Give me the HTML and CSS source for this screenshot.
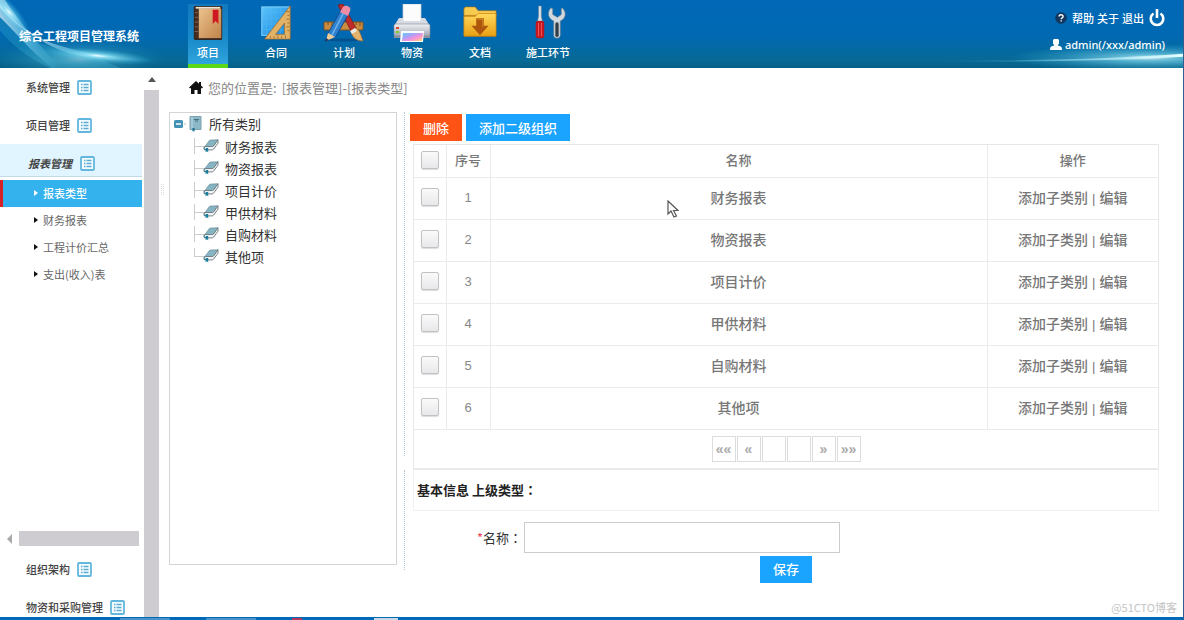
FILE: index.html
```html
<!DOCTYPE html>
<html lang="zh-CN">
<head>
<meta charset="utf-8">
<meta name="viewport" content="width=device-width, initial-scale=1">
<title>综合工程项目管理系统</title>
<link rel="stylesheet" href="styles.css">
</head>
<body>
<svg class="defs" aria-hidden="true">
  <defs>
    <linearGradient id="book" x1="0" y1="0" x2="1" y2="1"><stop offset="0" stop-color="#ecc28d"/><stop offset="1" stop-color="#c0824a"/></linearGradient>
    <linearGradient id="sky" x1="0" y1="0" x2="1" y2="1"><stop offset="0" stop-color="#5cc4fb"/><stop offset="1" stop-color="#1285e0"/></linearGradient>
    <linearGradient id="gold" x1="0" y1="0" x2="0" y2="1"><stop offset="0" stop-color="#ffd95c"/><stop offset="1" stop-color="#e9a013"/></linearGradient>
    <linearGradient id="steel" x1="0" y1="0" x2="0" y2="1"><stop offset="0" stop-color="#f1f2f5"/><stop offset="1" stop-color="#a0a5b2"/></linearGradient>
    <linearGradient id="rainbow" x1="0" y1="0" x2="1" y2="1"><stop offset="0" stop-color="#5ccdfc"/><stop offset=".35" stop-color="#ab9ff7"/><stop offset=".65" stop-color="#fa92d6"/><stop offset="1" stop-color="#ffe36c"/></linearGradient>
    <radialGradient id="glow"><stop offset="0" stop-color="#fff"/><stop offset=".2" stop-color="#9beafa" stop-opacity=".8"/><stop offset="1" stop-color="#2fb4dc" stop-opacity="0"/></radialGradient>
    <linearGradient id="beam" x1="0" y1="0" x2="1" y2="0"><stop offset="0" stop-color="#fff" stop-opacity=".9"/><stop offset=".5" stop-color="#7fd4f2" stop-opacity=".7"/><stop offset="1" stop-color="#4ab9dc" stop-opacity="0"/></linearGradient>
    <linearGradient id="beam-r" x1="0" y1="0" x2="1" y2="0"><stop offset="0" stop-color="#4fc4e8" stop-opacity="0"/><stop offset="1" stop-color="#e6ffff"/></linearGradient>
    <symbol id="list" viewBox="0 0 15 15"><rect x="1" y="1" width="13" height="13" rx="1" fill="#f4fbff" stroke="#63b7dd" stroke-width="1.8"/><path d="M4 4.500h1.500M6.500 4.500h5M4 7.500h1.500M6.500 7.500h5M4 10.500h1.500M6.500 10.500h5" stroke="#5cacd2" stroke-width="1.300"/></symbol>
    <symbol id="leaf" viewBox="0 0 16 14"><path d="M2 7.500 6 2q.6-.8 1.500-.9L15 .8l-4.200 6q-.5.700-1.400.8z" fill="#86b5c4" stroke="#6c8c98" stroke-width=".7"/><path d="M2 7.500 9.400 7.600q.9-.1 1.400-.8L15 .8v3.400l-4.500 6q-.5.700-1.500.7H5" fill="#f4f6f7" stroke="#69757c" stroke-width=".9"/><path d="M2 7.500Q.3 9 1.500 10.600h2" fill="none" stroke="#58808e" stroke-width="1.200"/><path d="M2.600 9h2.600v4.500L4 12.300l-1.400 1z" fill="#1b7d9c"/></symbol>
  </defs>
</svg>
<div class="app">
  <header class="header">
    <svg class="glare glare-left" viewBox="0 0 170 67" preserveAspectRatio="none" aria-hidden="true">
      <path d="M0 12C22 38 50 50 92 54L120 67H50C24 55 10 42 0 30z" fill="#2fa5c8" opacity=".35"/>
      <ellipse cx="80" cy="58" rx="85" ry="20" fill="url(#glow)" opacity=".4"/>
      <path d="M0 0h5c13 20 30 40 56 67h-9C28 48 14 30 0 17z" fill="url(#beam)" opacity=".7"/>
      <path d="M0 4c14 20 40 42 98 49 24 4 44 6 62 6-48 3-95-2-122-21C20 28 10 18 0 8z" fill="url(#beam)" opacity=".7"/>
      <ellipse cx="98" cy="55" rx="56" ry="7" fill="url(#glow)" transform="rotate(5 98 55)"/>
      <ellipse cx="9" cy="12" rx="30" ry="9" fill="url(#glow)" opacity=".95" transform="rotate(48 9 12)"/>
    </svg>
    <svg class="glare glare-right" viewBox="0 0 280 67" preserveAspectRatio="none" aria-hidden="true">
      <ellipse cx="245" cy="57" rx="140" ry="14" fill="url(#glow)" opacity=".8"/>
      <path d="M30 60Q180 60 280 53v3Q180 62 30 60z" fill="url(#beam-r)"/>
    </svg>
    <h1 class="brand">综合工程项目管理系统</h1>
    <nav class="nav" aria-label="主导航">
      <a class="nav-item active" href="#project">
        <svg class="nav-icon" viewBox="0 0 38 38" aria-hidden="true"><rect x="4" y="1" width="30" height="36" rx="1.500" fill="#352822"/><path d="M6 2h26v2H6z" fill="#eee3d3"/><rect x="9" y="4" width="24" height="31" fill="url(#book)"/><path d="M5 4h4v31H5z" fill="#4a2c1e"/><path d="M5 8h4M5 13h4M5 18h4M5 23h4M5 28h4" stroke="#7d6251"/><path d="M24 5h6v15l-3-3-3 3z" fill="#cf1920"/></svg>
        <span>项目</span></a>
      <a class="nav-item" href="#contract">
        <svg class="nav-icon" viewBox="0 0 38 38" aria-hidden="true"><rect x="4" y="2" width="29" height="30" fill="url(#sky)" stroke="#8ad6fa"/><path d="M9 2v30M14 2v30M19 2v30M24 2v30M4 8h29M4 14h29M4 20h29M4 26h29" stroke="#56b9f1" stroke-width=".5"/><path fill-rule="evenodd" d="M34 1v35H7zm-6 18L18.500 31H28z" fill="#e2b267" stroke="#9d6827" stroke-width=".8"/><path d="M33 7h-3M33 11h-2M33 15h-3M33 19h-2M33 23h-3M33 27h-2M13 35v-2M17 35v-2M21 35v-3M25 35v-2M29 35v-3" stroke="#82551f" stroke-width=".7"/></svg>
        <span>合同</span></a>
      <a class="nav-item" href="#plan">
        <svg class="nav-icon nav-icon-wide" viewBox="0 0 42 38" aria-hidden="true"><ellipse cx="21" cy="36" rx="17" ry="1.500" fill="#06417b" opacity=".6"/><rect x="1" y="18" width="39" height="8" rx="1" fill="#c98b42" stroke="#85521b"/><path d="M5 18v3M9 18v4M13 18v3M29 18v4M33 18v3M37 18v4" stroke="#79501f"/><path d="m15 1 5-1 14 26-5 3z" fill="#bd2b2b" stroke="#761515" stroke-width=".7"/><path d="m28 27 5-3c4 2 5 8 7 13-6 0-11-3-12-10z" fill="#e4b36b" stroke="#9b672d" stroke-width=".7"/><path d="m27 27 5-3 2 3-5 3z" fill="#ebe9df"/><path d="m18 6 8 3L12 34l-8-3z" fill="#2f80cf" stroke="#114c8e"/><path d="m21 8-13 25" stroke="#6fb6ea" stroke-width="1.500"/><path d="m5 29 7 4-9 4z" fill="#f0cb93"/><path d="m3 34 3 2-4 2z" fill="#24345c"/><path d="m17 8 3-5c3-3 9 0 7 4l-2 5z" fill="#f08da5"/></svg>
        <span>计划</span></a>
      <a class="nav-item" href="#material">
        <svg class="nav-icon nav-icon-wide" viewBox="0 0 42 38" aria-hidden="true"><path d="M9 16h24l6 6v12H3V22z" fill="#8e929f"/><path d="M12 0h18v18H12z" fill="#fcfcfd" stroke="#c5cbd8" stroke-width=".7"/><path d="M8 14h4v3h18v-3h4l5 8H3z" fill="#d8dbe2"/><rect x="3" y="20" width="36" height="12" rx="2" fill="url(#steel)" stroke="#858c9b" stroke-width=".6"/><path d="M5 24h3" stroke="#db4a2a" stroke-width="2"/><path d="M5 28h3" stroke="#7cca2d" stroke-width="2"/><path d="M10 27h23l-1 11H9z" fill="#fafbfc"/><path d="M12 29h20l-1 8H11z" fill="url(#rainbow)"/></svg>
        <span>物资</span></a>
      <a class="nav-item" href="#docs">
        <svg class="nav-icon" viewBox="0 0 38 38" aria-hidden="true"><path d="M2 3h12l3 4h18v26H2z" fill="#d99018"/><path d="M2 4.500 3.500 2H14l3 4h19v5H2z" fill="#f7ca50" stroke="#a77011" stroke-width=".6"/><path d="M2 12h12l3-3h19v24H2z" fill="url(#gold)" stroke="#c27c0c" stroke-width=".7"/><path d="M15 14h8v8h5l-9 10-9-10h5z" fill="#ae570c"/><path d="M16 15h6v8" fill="none" stroke="#d68a29"/></svg>
        <span>文档</span></a>
      <a class="nav-item" href="#construction">
        <svg class="nav-icon" viewBox="0 0 38 38" aria-hidden="true"><path d="M9 1h3v11l1 5H8l1-5z" fill="#dce2e8" stroke="#637c91" stroke-width=".6"/><rect x="6" y="17" width="9" height="18" rx="2.500" fill="#c3161e"/><path d="M9 19v14M12 19v14" stroke="#f35c5f"/><path d="M22 3c-5 6-2 12 3 14v15q0 3 3.500 3t3.500-3V17c6-3 7-9 2-14l-1 1v6l-4 3-5-3V4z" fill="#d1d8de" stroke="#60788b" stroke-width=".7"/><path d="M28.500 20v12" stroke="#303d47" stroke-width="3.500" stroke-linecap="round"/></svg>
        <span>施工环节</span></a>
    </nav>
    <div class="account">
      <div class="account-links">
        <svg class="help-icon" viewBox="0 0 13 13" aria-hidden="true"><circle cx="6.500" cy="6.500" r="6.300" fill="#12365d"/><path d="M4.400 5q0-2 2.200-2t2.200 1.800c0 1.500-2.100 1.500-2.100 3M6.700 9v1.400" fill="none" stroke="#fff" stroke-width="1.500"/></svg>
        <a href="#help">帮助</a><a href="#about">关于</a><a href="#logout">退出</a>
        <svg class="power-icon" viewBox="0 0 16 18" aria-hidden="true"><path d="M4.500 4.500a6.300 6.300 0 1 0 7 0M8 0v9" fill="none" stroke="#fff" stroke-width="2.600"/></svg>
      </div>
      <div class="account-user">
        <svg class="user-icon" viewBox="0 0 12 11" aria-hidden="true"><path d="M4 0h4l1 1v3.500L7.700 6.500 11 7.500q1 .5 1 3.500H0q0-3 1-3.500l3.300-1L3 4.500V1z" fill="#fff"/></svg>
        <span>admin(/xxx/admin)</span>
      </div>
    </div>
  </header>
  <div class="body">
    <aside class="sidebar">
      <nav class="menu" aria-label="侧边菜单">
        <a class="menu-group" href="#sys">系统管理<svg class="list-icon"><use href="#list"/></svg></a>
        <a class="menu-group" href="#prj">项目管理<svg class="list-icon"><use href="#list"/></svg></a>
        <a class="menu-group open" href="#report"><em>报表管理</em><svg class="list-icon"><use href="#list"/></svg></a>
        <div class="submenu">
          <a class="submenu-item active" href="#type">报表类型</a>
          <a class="submenu-item" href="#finance">财务报表</a>
          <a class="submenu-item" href="#pricing">工程计价汇总</a>
          <a class="submenu-item" href="#expense">支出(收入)表</a>
        </div>
        <div class="hscroll"><span class="arrow-left"></span><span class="hthumb"></span></div>
        <a class="menu-group" href="#org">组织架构<svg class="list-icon"><use href="#list"/></svg></a>
        <a class="menu-group" href="#purchase">物资和采购管理<svg class="list-icon"><use href="#list"/></svg></a>
      </nav>
      <div class="vscroll"><span class="arrow-up"></span><span class="vthumb"></span></div>
    </aside>
    <main class="main">
      <div class="breadcrumb">
        <svg class="home-icon" viewBox="0 0 14 13" aria-hidden="true"><path d="M7 0 10 2.700V1h2v3.500l2 2-1 1-1-.8V13H8.500V9h-3v4H2V6.700l-1 .8-1-1z" fill="#111"/></svg>
        <span>您的位置是:</span><span>[报表管理]-[报表类型]</span>
      </div>
      <div class="panes">
        <section class="tree" aria-label="类别">
          <div class="tree-root">
            <svg class="toggle-icon" viewBox="0 0 12 10" aria-hidden="true"><rect width="9" height="8" y="1" rx="1.500" fill="#4391b5"/><path d="M2 5h5" stroke="#fff" stroke-width="1.500"/><path d="M10 5h2" stroke="#bbb"/></svg>
            <svg class="root-icon" viewBox="0 0 13 16" aria-hidden="true"><path d="M1 .5h11v13H1z" fill="#8db8c8" stroke="#7fa2af"/><path d="M3 1v12" stroke="#bcdae5"/><path d="M5 3.500h5M6 5h3" stroke="#476f80"/><path d="M3.500 12h2v4l-1-1-1 .5z" fill="#176f91"/></svg>
            <span>所有类别</span>
          </div>
          <ul class="tree-list">
            <li><svg class="leaf-icon"><use href="#leaf"/></svg>财务报表</li>
            <li><svg class="leaf-icon"><use href="#leaf"/></svg>物资报表</li>
            <li><svg class="leaf-icon"><use href="#leaf"/></svg>项目计价</li>
            <li><svg class="leaf-icon"><use href="#leaf"/></svg>甲供材料</li>
            <li><svg class="leaf-icon"><use href="#leaf"/></svg>自购材料</li>
            <li><svg class="leaf-icon"><use href="#leaf"/></svg>其他项</li>
          </ul>
        </section>
        <div class="splitter"><span class="split-upper"></span><span class="split-lower"></span></div>
        <section class="content">
          <div class="toolbar"><button class="btn danger" type="button">删除</button><button class="btn" type="button">添加二级组织</button></div>
          <div class="sheet">
            <table class="grid">
              <colgroup><col class="col-check"><col class="col-no"><col><col class="col-actions"></colgroup>
              <thead><tr><th><input type="checkbox" aria-label="全选"></th><th>序号</th><th>名称</th><th>操作</th></tr></thead>
              <tbody>
                <tr><td><input type="checkbox" aria-label="选择 1"></td><td class="no">1</td><td>财务报表</td><td><a href="#add">添加子类别</a><span class="bar">|</span><a href="#edit">编辑</a></td></tr>
                <tr><td><input type="checkbox" aria-label="选择 2"></td><td class="no">2</td><td>物资报表</td><td><a href="#add">添加子类别</a><span class="bar">|</span><a href="#edit">编辑</a></td></tr>
                <tr><td><input type="checkbox" aria-label="选择 3"></td><td class="no">3</td><td>项目计价</td><td><a href="#add">添加子类别</a><span class="bar">|</span><a href="#edit">编辑</a></td></tr>
                <tr><td><input type="checkbox" aria-label="选择 4"></td><td class="no">4</td><td>甲供材料</td><td><a href="#add">添加子类别</a><span class="bar">|</span><a href="#edit">编辑</a></td></tr>
                <tr><td><input type="checkbox" aria-label="选择 5"></td><td class="no">5</td><td>自购材料</td><td><a href="#add">添加子类别</a><span class="bar">|</span><a href="#edit">编辑</a></td></tr>
                <tr><td><input type="checkbox" aria-label="选择 6"></td><td class="no">6</td><td>其他项</td><td><a href="#add">添加子类别</a><span class="bar">|</span><a href="#edit">编辑</a></td></tr>
              </tbody>
            </table>
            <div class="pager">
              <button type="button" aria-label="首页">««</button><button type="button" aria-label="上一页">«</button><button type="button" aria-label="上一组"></button><button type="button" aria-label="下一组"></button><button type="button" aria-label="下一页">»</button><button type="button" aria-label="末页">»»</button>
            </div>
          </div>
          <h2 class="section-title">基本信息 上级类型<span class="colon" lang="zh-TW">：</span></h2>
          <form class="form">
            <div class="field"><label for="name"><span class="required">*</span>名称<span class="colon" lang="zh-TW">：</span></label><input id="name" type="text"></div>
            <button class="btn save" type="button">保存</button>
          </form>
        </section>
      </div>
      <span class="handle"></span>
      <svg class="pointer" viewBox="0 0 12 18" aria-hidden="true"><path d="M1 1v13l3-3 3 6 2.500-1-3-5.500H11z" fill="#fff" stroke="#555" stroke-width="1.200"/></svg>
      <span class="watermark">@51CTO博客</span>
    </main>
  </div>
  <footer class="taskbar"><span class="task"></span><span class="task"></span><span class="task task-red"></span><span class="task task-light"></span></footer>
</div>
</body>
</html>
```
FILE: styles.css
```css
* { box-sizing: border-box; }
body { margin: 0; font-family: "Noto Sans CJK SC", sans-serif; font-size: 13px; color: #333; background: #fff; }
a { color: inherit; text-decoration: none; }
button, input { font: inherit; }
svg { display: block; flex: none; }
.defs { position: absolute; width: 0; height: 0; }
.app { display: flex; flex-direction: column; min-height: 100vh; border-right: 1px solid #315f91; }

.header { position: relative; display: flex; height: 68px; color: #fff; background: linear-gradient(#0068b6, #0069b3 50%, #076994 90%, #075f85); overflow: hidden; }
.glare { position: absolute; top: 0; height: 100%; }
.glare-left { left: 0; width: 170px; }
.glare-right { right: 0; width: 280px; }
.brand { position: relative; width: 174px; margin: 0; padding: 26px 0 0 19px; font-size: 12px; line-height: 20px; font-weight: 700; white-space: nowrap; }
.nav { display: flex; padding-top: 4px; }
.nav-item { display: flex; flex-direction: column; align-items: center; width: 68px; height: 64px; font-size: 11px; line-height: 20px; font-weight: 500; border-bottom: 4px solid transparent; }
.nav-item.active { width: 40px; margin: 0 14px; background: linear-gradient(#1378bd, #1b8ccb 60%, #2fa4dd); border-bottom-color: #5bd716; }
.nav-icon { width: 36px; height: 38px; }
.nav-icon-wide { width: 42px; }
.account { position: relative; margin-left: auto; padding: 8px 18px 0 0; font-weight: 500; }
.account-links { display: flex; align-items: center; justify-content: flex-end; gap: 3px; height: 20px; font-size: 11px; }
.help-icon { width: 12px; height: 12px; margin-right: 2px; }
.power-icon { width: 16px; height: 18px; margin-left: 2px; }
.account-user { display: flex; align-items: center; justify-content: flex-end; gap: 3px; height: 20px; margin-top: 6px; font-family: "Noto Sans", sans-serif; font-size: 11px; }
.user-icon { width: 12px; height: 11px; }

.body { display: flex; flex: 1; }
.sidebar { display: flex; width: 159px; flex: none; }
.menu { display: flex; flex-direction: column; width: 142px; }
.menu-group { display: flex; align-items: center; gap: 7px; padding: 9px 0 9px 26px; font-size: 11px; line-height: 20px; font-weight: 500; color: #444; white-space: nowrap; }
.menu-group.open { gap: 8px; padding: 9px 0 3px 28px; margin-bottom: 3px; background: #e0f5ff; border-bottom: 1px solid #c2d9e6; }
.menu-group:last-child { padding-bottom: 0; }
.menu-group em { font-weight: 700; }
.list-icon { width: 15px; height: 15px; }
.submenu { flex: 1; }
.submenu-item { display: flex; align-items: center; height: 27px; padding: 0 0 1px 31px; font-size: 11px; color: #666; border-left: 3px solid transparent; }
.submenu-item::before { content: ""; margin-right: 5px; border: 3px solid transparent; border-left: 4px solid #111; border-right: 0; }
.submenu-item.active { color: #fff; font-weight: 500; background: #34b2ee; border-left-color: #d62027; }
.submenu-item.active::before { border-left-color: #fff; }
.hscroll { display: flex; align-items: center; gap: 7px; height: 15px; margin: 0 3px 4px 7px; }
.arrow-left { border: 5px solid transparent; border-right-color: #aaa; border-left: 0; }
.hthumb { flex: 1; height: 15px; background: #ceccd0; }
.vscroll { display: flex; flex-direction: column; align-items: center; gap: 8px; width: 15px; margin-left: 2px; padding-top: 9px; }
.arrow-up { border: 4px solid transparent; border-bottom: 5px solid #555; border-top: 0; }
.vthumb { flex: 1; width: 100%; background: #ceccd0; }

.main { position: relative; flex: 1; min-width: 0; padding: 0 24px 0 10px; }
.breadcrumb { display: flex; align-items: center; gap: 5px; height: 44px; padding: 0 0 6px 20px; color: #888; }
.home-icon { width: 14px; height: 13px; }
.panes { display: flex; }
.tree { width: 228px; flex: none; margin-bottom: 18px; padding: 0 4px; border: 1px solid #d4d4d4; color: #333; }
.tree-root { display: flex; align-items: center; height: 21px; }
.toggle-icon { width: 12px; height: 10px; margin-right: 3px; }
.root-icon { width: 13px; height: 16px; margin-right: 7px; }
.tree-list { margin: 0; padding: 1px 0 0 20px; list-style: none; }
.tree-list li { position: relative; display: flex; align-items: center; height: 22px; padding-left: 9px; }
.tree-list li::before { content: ""; position: absolute; left: 0; top: 3px; width: 9px; height: 8px; border-left: 1px solid #ccc; border-bottom: 1px solid #ccc; }
.tree-list li:not(:last-child)::after { content: ""; position: absolute; left: 0; top: 11px; height: 8px; border-left: 1px solid #ccc; }
.leaf-icon { width: 16px; height: 14px; margin-right: 6px; }
.splitter { display: flex; flex-direction: column; gap: 14px; width: 1px; margin: 0 5px 13px 7px; }
.splitter span { border-left: 1px dotted #b4c6d2; }
.split-upper { flex: 344; }
.split-lower { flex: 99; }
.content { flex: 1; min-width: 0; padding-top: 2px; }
.toolbar { display: flex; gap: 4px; margin-bottom: 3px; }
.btn { height: 27px; padding: 0 13px; border: 0; color: #fff; background: #1aa3ff; font-weight: 500; line-height: 20px; }
.btn.danger { background: #ff5316; }
.sheet { margin-left: 3px; border: 1px solid #e7e7e7; border-bottom: 2px solid #eaeaea; }
.grid { width: 100%; border-collapse: collapse; table-layout: fixed; }
.col-check { width: 32px; }
.col-no { width: 44px; }
.col-actions { width: 171px; }
.grid th, .grid td { height: 42px; padding: 0 0 2px; text-align: center; border: 1px solid #ebebeb; font-size: 14px; font-weight: 500; color: #777; }
.grid tr > :first-child { border-left: 0; }
.grid tr > :last-child { border-right: 0; }
.grid th { height: 32px; border-top: 0; font-size: 13px; }
.grid td.no { font-family: "Liberation Sans", sans-serif; font-size: 13px; font-weight: 400; color: #888; }
.bar { margin: 0 4px; font-family: "Liberation Sans", sans-serif; font-size: 13px; font-weight: 400; }
.grid input { display: block; appearance: none; width: 18px; height: 18px; margin: 0 auto; border: 1px solid #c2c2c2; border-radius: 2px; background: linear-gradient(#fafafa, #e8e8eb); box-shadow: 0 1px 1px #ddd; }
.pager { display: flex; justify-content: center; gap: 1px; padding: 6px 0; }
.pager button { display: grid; place-items: center; width: 24px; height: 26px; padding: 0; border: 1px solid #ddd; background: #fff; color: #aaa; font-family: "Liberation Sans", sans-serif; font-size: 14px; font-weight: 700; }
.section-title { margin: 0 0 0 3px; padding: 10px 3px; border: 1px solid #f2f2f2; border-top: 0; font-size: 13px; line-height: 20px; font-weight: 700; color: #222; }
.colon { font-family: "Noto Sans CJK TC", sans-serif; }
.form { display: flex; flex-direction: column; margin-left: 3px; padding-top: 11px; }
.field { display: flex; align-items: center; margin-bottom: 3px; }
.field label { width: 111px; padding-right: 2px; text-align: right; }
.required { color: #f04455; }
.field input { width: 316px; height: 31px; padding: 0 8px; border: 1px solid #ccc; background: #fff; }
.save { align-self: center; }
.handle { position: absolute; left: 2px; top: 116px; width: 3px; height: 11px; border: 1px dotted #ddd; }
.pointer { position: absolute; left: 508px; top: 132px; width: 12px; height: 18px; }
.watermark { position: absolute; right: 6px; bottom: 0; font-size: 11px; line-height: 20px; color: #c4c4c4; }

.taskbar { display: flex; align-items: flex-end; gap: 36px; height: 3px; padding-left: 120px; background: #006ab8; }
.task { width: 50px; height: 2px; background: #4894ca; }
.task-red { width: 10px; background: #b5395d; }
.task-light { width: 24px; margin-left: 36px; background: #c8d8e4; }
```
